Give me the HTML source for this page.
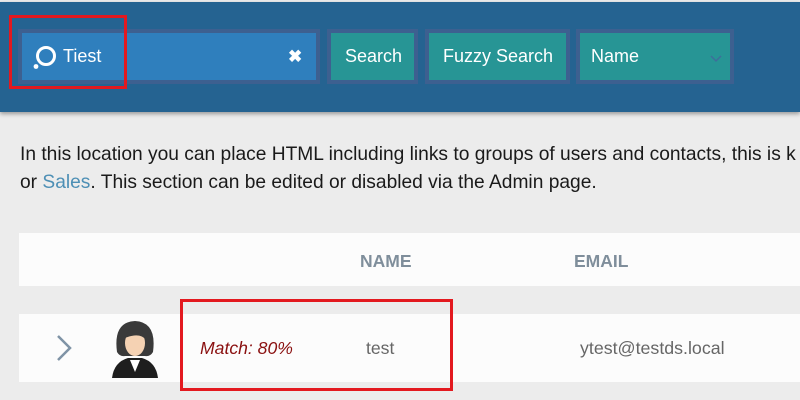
<!DOCTYPE html>
<html><head><style>
*{margin:0;padding:0;box-sizing:border-box}
body{width:800px;height:400px;overflow:hidden;background:#ececec;font-family:"Liberation Sans",Arial,sans-serif;position:relative}
.hdr{position:absolute;left:0;top:2px;width:800px;height:110px;background:#256391;box-shadow:0 2px 4px rgba(0,0,0,.35)}
.box{position:absolute;border:4px solid #3d6090;color:#fff;font-size:18px}
.teal{background:#279595}
.lbl{position:absolute;top:0;line-height:47px}
.red{position:absolute;border:3px solid #e3191f}
p{position:absolute;left:20px;top:141px;font-size:19.2px;line-height:28px;color:#1a1a1a;white-space:nowrap}
p a{color:#4d8fb5}
.wrow{position:absolute;left:19px;width:781px;background:#fcfcfc}
.th{position:absolute;top:18px;font-size:17.5px;font-weight:bold;color:#7f8e9b}
</style></head><body>
<div class="hdr">
 <div class="box" style="left:18px;top:27px;width:302px;height:55px;background:#2f7fbd">
  <svg style="position:absolute;left:4px;top:8px" width="34" height="34"><circle cx="20" cy="15" r="8.5" fill="none" stroke="#fff" stroke-width="3"/><circle cx="10" cy="25.5" r="2.4" fill="#fff"/></svg>
  <span class="lbl" style="left:41px">Tiest</span>
  <span class="lbl" style="left:266px;font-weight:bold;font-size:17px">✖</span>
 </div>
 <div class="box teal" style="left:327px;top:27px;width:91px;height:55px"><span class="lbl" style="left:14px">Search</span></div>
 <div class="box teal" style="left:425px;top:27px;width:145px;height:55px"><span class="lbl" style="left:14px">Fuzzy Search</span></div>
 <div class="box teal" style="left:576px;top:27px;width:158px;height:55px"><span class="lbl" style="left:11px">Name</span>
  <svg style="position:absolute;left:130px;top:22px" width="12" height="8"><path d="M1 1 L6 6 L11 1" fill="none" stroke="#3d6f9a" stroke-width="1.5"/></svg></div>
</div>
<div class="red" style="left:9px;top:15px;width:118px;height:74px"></div>
<p>In this location you can place HTML including links to groups of users and contacts, this is k<br>or <a>Sales</a>. This section can be edited or disabled via the Admin page.</p>
<div class="wrow" style="top:233px;height:53px">
 <span class="th" style="left:341px">NAME</span><span class="th" style="left:555px">EMAIL</span>
</div>
<div class="wrow" style="top:314px;height:68px">
 <svg style="position:absolute;left:36px;top:20px" width="20" height="30"><path d="M3 2 L15 14 L3 26" fill="none" stroke="#7f93a6" stroke-width="2.5"/></svg>
 <svg style="position:absolute;left:89px;top:6px" width="54" height="58">
  <path d="M4 58 Q6 42 20 38 L34 38 Q48 42 50 58Z" fill="#1e1e1e"/>
  <path d="M22 40 L27 52 L32 40Z" fill="#fff"/>
  <path d="M9 32 Q5 2 27 1 Q49 2 45 32 Q42 37 37 36 L17 36 Q12 37 9 32Z" fill="#3a3a3a"/>
  <ellipse cx="27" cy="23" rx="10" ry="13" fill="#f5d2b3"/>
  <path d="M17 18 Q20 6 30 8 Q38 10 38 20 Q32 12 17 18Z" fill="#3a3a3a"/>
 </svg>
 <span style="position:absolute;left:181px;top:24px;font-size:17.6px;font-style:italic;color:#8a1010">Match: 80%</span>
 <span style="position:absolute;left:347px;top:24px;font-size:17.6px;color:#666">test</span>
 <span style="position:absolute;left:561px;top:24px;font-size:17.8px;color:#666">ytest@testds.local</span>
</div>
<div class="red" style="left:180px;top:299px;width:273px;height:92px"></div>
</body></html>
